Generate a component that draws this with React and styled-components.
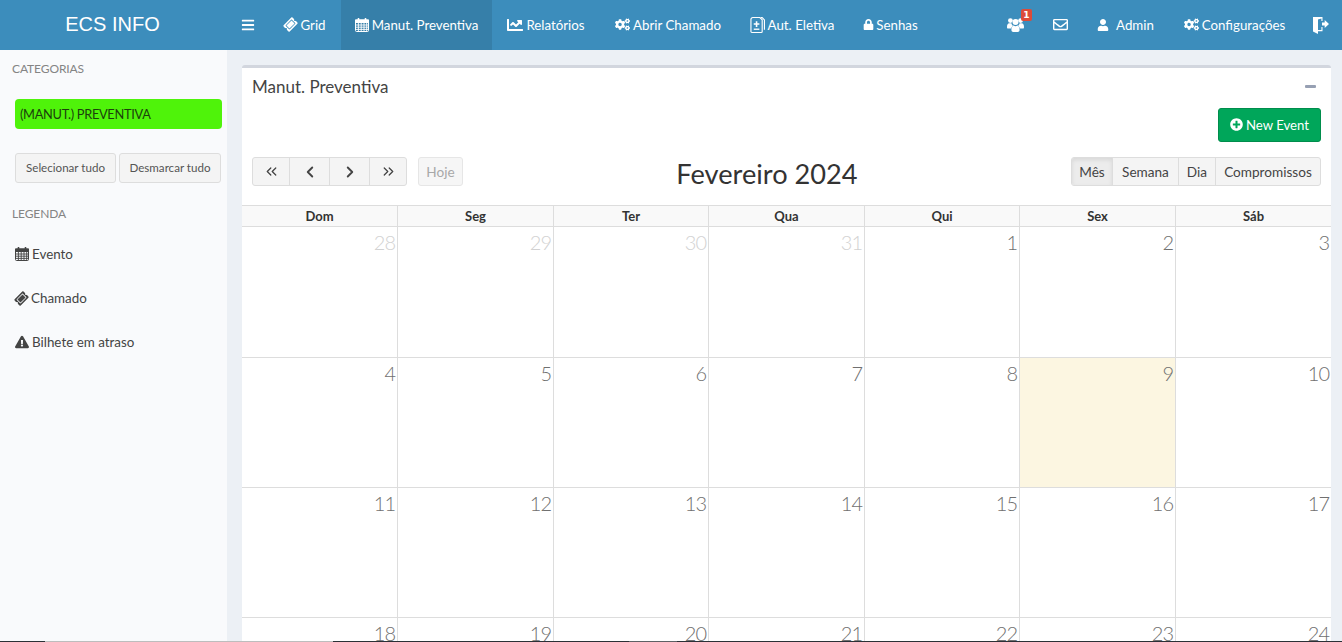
import React from "react";
import styled, { createGlobalStyle } from "styled-components";
import { FaTicketAlt, FaChartLine, FaCogs, FaLock, FaRegEnvelope, FaUser, FaExclamationTriangle, FaPlusCircle, FaBars } from "react-icons/fa";
import { ChevronLeft, ChevronRight, ChevronsLeft, ChevronsRight } from "lucide-react";

const Global = createGlobalStyle`
  html, body { margin: 0; padding: 0; height: 100%; overflow: hidden; }
  body { font-family: Lato, "Open Sans", sans-serif; font-size: 14px; color: #333; background: #ecf0f5; }
  * { box-sizing: border-box; }
`;

const Shell = styled.div`
  height: 100vh;
  overflow: hidden;
  display: flex;
  flex-direction: column;
  position: relative;
`;
const TopBar = styled.header`
  height: 50px;
  flex: none;
  display: flex;
  background: #3c8dbc;
  color: #fff;
`;
const Logo = styled.div`
  width: 225px;
  flex: none;
  display: flex;
  align-items: center;
  justify-content: center;
  margin-right: 2px;
  font-family: "Liberation Sans", Arial, sans-serif;
  font-size: 20px;
  padding-bottom: 1px;
`;
const NavGroup = styled.nav`
  display: flex;
  ${p => p.$right && "margin-left: auto;"}
`;
const NavItem = styled.div`
  width: ${p => p.$w}px;
  height: 50px;
  display: flex;
  align-items: center;
  justify-content: center;
  gap: ${p => p.$gap ?? 3}px;
  font-size: 13.3px;
  padding-bottom: 1px;
  white-space: nowrap;
  position: relative;
  background: ${p => (p.$active ? "#367fa9" : "transparent")};
`;
const Badge = styled.span`
  position: absolute;
  top: 9px;
  left: 29px;
  width: 11px;
  height: 12px;
  border-radius: 2px;
  background: #dd4b39;
  color: #fff;
  font: 700 9px/12px "DejaVu Sans", sans-serif;
  text-align: center;
`;
const Tilted = styled(FaTicketAlt)`
  transform: rotate(-45deg);
`;
const Body = styled.div`
  flex: 1;
  display: flex;
  min-height: 0;
`;
const Sidebar = styled.aside`
  width: 227px;
  flex: none;
  background: #f9fafc;
  padding: 12px 5px 0 0;
`;
const SideTitle = styled.div`
  padding-left: 12px;
  font-size: 12px;
  line-height: 14px;
  letter-spacing: -0.1px;
  color: #848484;
  margin-top: ${p => p.$mt || 0}px;
`;
const CategoryPill = styled.div`
  margin: 23px 0 0 15px;
  height: 30px;
  border-radius: 4px;
  background: #4ff30a;
  color: #1c3f0d;
  font-size: 12.8px;
  letter-spacing: -0.3px;
  line-height: 30px;
  padding-left: 5px;
`;
const SideButtons = styled.div`
  margin: 24px 0 0 15px;
  display: flex;
  gap: 3px;
`;
const SideButton = styled.div`
  width: ${p => p.$w}px;
  height: 30px;
  border: 1px solid #ddd;
  border-radius: 3px;
  background: #f4f4f4;
  color: #555;
  font-size: 11.6px;
  padding-bottom: 1px;
  display: flex;
  align-items: center;
  justify-content: center;
`;
const Legend = styled.div`
  margin-top: 11px;
  display: flex;
  flex-direction: column;
`;
const LegendItem = styled.div`
  height: 44px;
  padding-left: 15px;
  display: flex;
  align-items: center;
  gap: 3px;
  color: #444;
  font-size: 13.4px;
`;
const Main = styled.main`
  flex: 1;
  min-width: 0;
  padding: 15px 11px 0 15px;
`;
const Box = styled.section`
  background: #fff;
  border-top: 3px solid #d2d6de;
  border-radius: 3px 3px 0 0;
  height: 800px;
`;
const BoxHeader = styled.div`
  height: 40px;
  padding: 0 15px 3px 10px;
  display: flex;
  align-items: center;
  justify-content: space-between;
  color: #444;
  font-size: 17px;
`;
const MinusBar = styled.span`
  width: 11px;
  height: 3px;
  border-radius: 1px;
  background: #97a0b3;
`;
const ActionRow = styled.div`
  display: flex;
  justify-content: flex-end;
  padding-right: 10px;
`;
const GreenButton = styled.div`
  width: 103px;
  height: 34px;
  border-radius: 3px;
  border: 1px solid #008d4c;
  background: #00a65a;
  color: #fff;
  font-size: 13.2px;
  padding-bottom: 1px;
  display: flex;
  align-items: center;
  justify-content: center;
  gap: 3px;
`;
const Toolbar = styled.div`
  margin: 15px 10px 19px;
  height: 29px;
  display: flex;
  justify-content: space-between;
  align-items: center;
`;
const ToolLeft = styled.div`
  display: flex;
  gap: 11px;
`;
const ToolRight = styled.div`
  display: flex;
`;
const Heading = styled.h2`
  margin: 0;
  padding-top: 4px;
  font-size: 27.2px;
  font-weight: 400;
  color: #333;
  line-height: 29px;
`;
const Group = styled.div`
  display: flex;
  border: 1px solid #ddd;
  border-radius: 3px;
  height: 29px;
  background: #f4f4f4;
  overflow: hidden;
`;
const GroupButton = styled.div`
  width: ${p => p.$w}px;
  display: flex;
  align-items: center;
  justify-content: center;
  color: #444;
  font-size: 13.6px;
  background: ${p => (p.$on ? "#ececec" : "transparent")};
  box-shadow: ${p => (p.$on ? "inset 0 2px 4px rgba(0,0,0,.09)" : "none")};
  border-left: ${p => (p.$first ? "none" : "1px solid #ddd")};
`;
const HojeButton = styled.div`
  width: 45px;
  height: 29px;
  border: 1px solid #e6e6e6;
  border-radius: 3px;
  background: #f6f6f6;
  color: #a8a8a8;
  font-size: 13.6px;
  display: flex;
  align-items: center;
  justify-content: center;
`;
const Cols = styled.div`
  display: grid;
  grid-template-columns: 155px 156px 155px 156px 155px 156px 1fr;
`;
const HeadRow = styled(Cols)`
  border-top: 1px solid #ddd;
  border-bottom: 1px solid #ddd;
  background: #f9f9f9;
  height: 22px;
`;
const HeadCell = styled.div`
  font-size: 13px;
  font-weight: 700;
  color: #333;
  text-align: center;
  line-height: 20px;
  border-left: ${p => (p.$first ? "none" : "1px solid #ddd")};
`;
const WeekRow = styled(Cols)`
  height: ${p => p.$h}px;
  border-bottom: 1px solid #ddd;
`;
const DayCell = styled.div`
  border-left: ${p => (p.$first ? "none" : "1px solid #ddd")};
  background: ${p => (p.$today ? "#fcf6e1" : "transparent")};
  text-align: right;
  padding: 3px 2px 0 0;
  font-size: 20px;
  font-weight: 300;
  line-height: 24px;
  letter-spacing: -1px;
  color: ${p => (p.$muted ? "#d2d2d2" : "#707070")};
`;
const BottomEdge = styled.div`
  position: absolute;
  left: 0;
  right: 0;
  bottom: 0;
  height: 1px;
  background: linear-gradient(to right,
    #2b3036 0 45px, #bdbdbd 45px 333px, #2b3036 333px 629px,
    #5d6165 629px 677px, #2b3036 677px);
`;

const Calendar = ({ size = 14 }) => (
  <svg width={size} height={size} viewBox="0 0 14 14" fill="none" stroke="currentColor" strokeWidth="1">
    <rect x="0.5" y="2" width="13" height="11.5" rx="1" />
    <rect x="0.5" y="2" width="13" height="2.5" fill="currentColor" />
    <path d="M0.5 7h13M0.5 9.2h13M0.5 11.4h13M3.4 4.5v9M6.2 4.5v9M9 4.5v9M11.7 4.5v9" strokeWidth="0.9" />
    <path d="M3.5 0.5v2.5M10.5 0.5v2.5" strokeWidth="1.6" strokeLinecap="round" />
  </svg>
);
const FilePlus = () => (
  <svg width="15" height="18" viewBox="0 0 16 18" fill="none" stroke="currentColor" strokeWidth="1.2">
    <path d="M3 1h7.5L13 3.5V16a1 1 0 0 1-1 1H2a1 1 0 0 1-1-1V3a2 2 0 0 1 2-2z" />
    <path d="M11.5 1h1.5l2.4 2.6V14" />
    <path d="M7 5v6M4 8h6" strokeWidth="1.7" />
    <path d="M4 13.5h6" strokeWidth="1.4" />
  </svg>
);
const Door = () => (
  <svg width="16" height="18" viewBox="0 0 16 18" fill="currentColor">
    <path d="M0 1h9.5v4H8.4V2.4L5 3.6V14h3.4v-3h1.1v4.2H5V18L0 15.6z" />
    <path d="M9 6.5h2.7V4L16 8l-4.3 4V9.5H9z" />
  </svg>
);
const People = () => (
  <svg width="17" height="15" viewBox="0 0 17 15" fill="currentColor">
    <circle cx="3.4" cy="3.6" r="2.4" />
    <circle cx="13.6" cy="3.6" r="2.4" />
    <path d="M0 10c0-2.6 1-3.8 2.2-3.8h2.2c.3 1.300 1 2.100 1.600 2.600-1 .7-1.500 1.500-1.700 2.700H1C.3 11.500 0 11 0 10z" />
    <path d="M17 10c0-2.600-1-3.800-2.200-3.800h-2.200c-.3 1.300-1 2.100-1.600 2.600 1 .7 1.500 1.500 1.700 2.700H16c.7 0 1-.5 1-1.500z" />
    <circle cx="8.500" cy="5" r="3" />
    <path d="M4.400 13c0-3 1.200-4.600 2.400-4.600.5.500 1 .8 1.700.8s1.200-.3 1.700-.8c1.200 0 2.400 1.600 2.400 4.600 0 1.300-.8 2-1.900 2H6.300c-1.100 0-1.900-.7-1.900-2z" />
  </svg>
);

const weeks = [
  { h: 131, days: [["28", 1], ["29", 1], ["30", 1], ["31", 1], ["1"], ["2"], ["3"]] },
  { h: 130, days: [["4"], ["5"], ["6"], ["7"], ["8"], ["9", 0, 1], ["10"]] },
  { h: 130, days: [["11"], ["12"], ["13"], ["14"], ["15"], ["16"], ["17"]] },
  { h: 130, days: [["18"], ["19"], ["20"], ["21"], ["22"], ["23"], ["24"]] },
];
const dayNames = ["Dom", "Seg", "Ter", "Qua", "Qui", "Sex", "Sáb"];

export default function App() {
  return (
    <Shell>
      <Global />
      <TopBar>
        <Logo>ECS INFO</Logo>
        <NavGroup>
          <NavItem $w={42}><FaBars size={14} /></NavItem>
          <NavItem $w={72}><Tilted size={13} /><span>Grid</span></NavItem>
          <NavItem $w={151} $active><Calendar /><span>Manut. Preventiva</span></NavItem>
          <NavItem $w={108}><FaChartLine size={16} /><span>Relatórios</span></NavItem>
          <NavItem $w={136}><FaCogs size={15} /><span>Abrir Chamado</span></NavItem>
          <NavItem $w={112}><FilePlus /><span>Aut. Eletiva</span></NavItem>
          <NavItem $w={85} $gap={2}><FaLock size={11} /><span>Senhas</span></NavItem>
        </NavGroup>
        <NavGroup $right>
          <NavItem $w={46}><People /><Badge>1</Badge></NavItem>
          <NavItem $w={44}><FaRegEnvelope size={15} /></NavItem>
          <NavItem $w={87}><FaUser size={12} style={{ marginRight: 4 }} /><span>Admin</span></NavItem>
          <NavItem $w={131}><FaCogs size={15} /><span>Configurações</span></NavItem>
          <NavItem $w={42}><Door /></NavItem>
        </NavGroup>
      </TopBar>
      <Body>
        <Sidebar>
          <SideTitle>CATEGORIAS</SideTitle>
          <CategoryPill>(MANUT.) PREVENTIVA</CategoryPill>
          <SideButtons>
            <SideButton $w={101}>Selecionar tudo</SideButton>
            <SideButton $w={102}>Desmarcar tudo</SideButton>
          </SideButtons>
          <SideTitle $mt={24}>LEGENDA</SideTitle>
          <Legend>
            <LegendItem><Calendar /><span>Evento</span></LegendItem>
            <LegendItem><Tilted size={13} /><span>Chamado</span></LegendItem>
            <LegendItem><FaExclamationTriangle size={14} /><span>Bilhete em atraso</span></LegendItem>
          </Legend>
        </Sidebar>
        <Main>
          <Box>
            <BoxHeader>
              <span>Manut. Preventiva</span>
              <MinusBar />
            </BoxHeader>
            <ActionRow>
              <GreenButton><FaPlusCircle size={13} /><span>New Event</span></GreenButton>
            </ActionRow>
            <Toolbar>
              <ToolLeft>
                <Group>
                  <GroupButton $w={36} $first><ChevronsLeft size={17} strokeWidth={1.8} /></GroupButton>
                  <GroupButton $w={40}><ChevronLeft size={18} strokeWidth={2.5} /></GroupButton>
                  <GroupButton $w={40}><ChevronRight size={18} strokeWidth={2.5} /></GroupButton>
                  <GroupButton $w={37}><ChevronsRight size={17} strokeWidth={1.8} /></GroupButton>
                </Group>
                <HojeButton>Hoje</HojeButton>
              </ToolLeft>
              <Heading>Fevereiro 2024</Heading>
              <ToolRight>
                <Group>
                  <GroupButton $w={40} $first $on>Mês</GroupButton>
                  <GroupButton $w={66}>Semana</GroupButton>
                  <GroupButton $w={37}>Dia</GroupButton>
                  <GroupButton $w={105}>Compromissos</GroupButton>
                </Group>
              </ToolRight>
            </Toolbar>
            <HeadRow>
              {dayNames.map((d, i) => <HeadCell key={d} $first={i === 0}>{d}</HeadCell>)}
            </HeadRow>
            {weeks.map(w => (
              <WeekRow key={w.days[0][0]} $h={w.h}>
                {w.days.map(([n, muted, today], i) => (
                  <DayCell key={n} $first={i === 0} $muted={muted} $today={today}>{n}</DayCell>
                ))}
              </WeekRow>
            ))}
          </Box>
        </Main>
      </Body>
      <BottomEdge />
    </Shell>
  );
}
